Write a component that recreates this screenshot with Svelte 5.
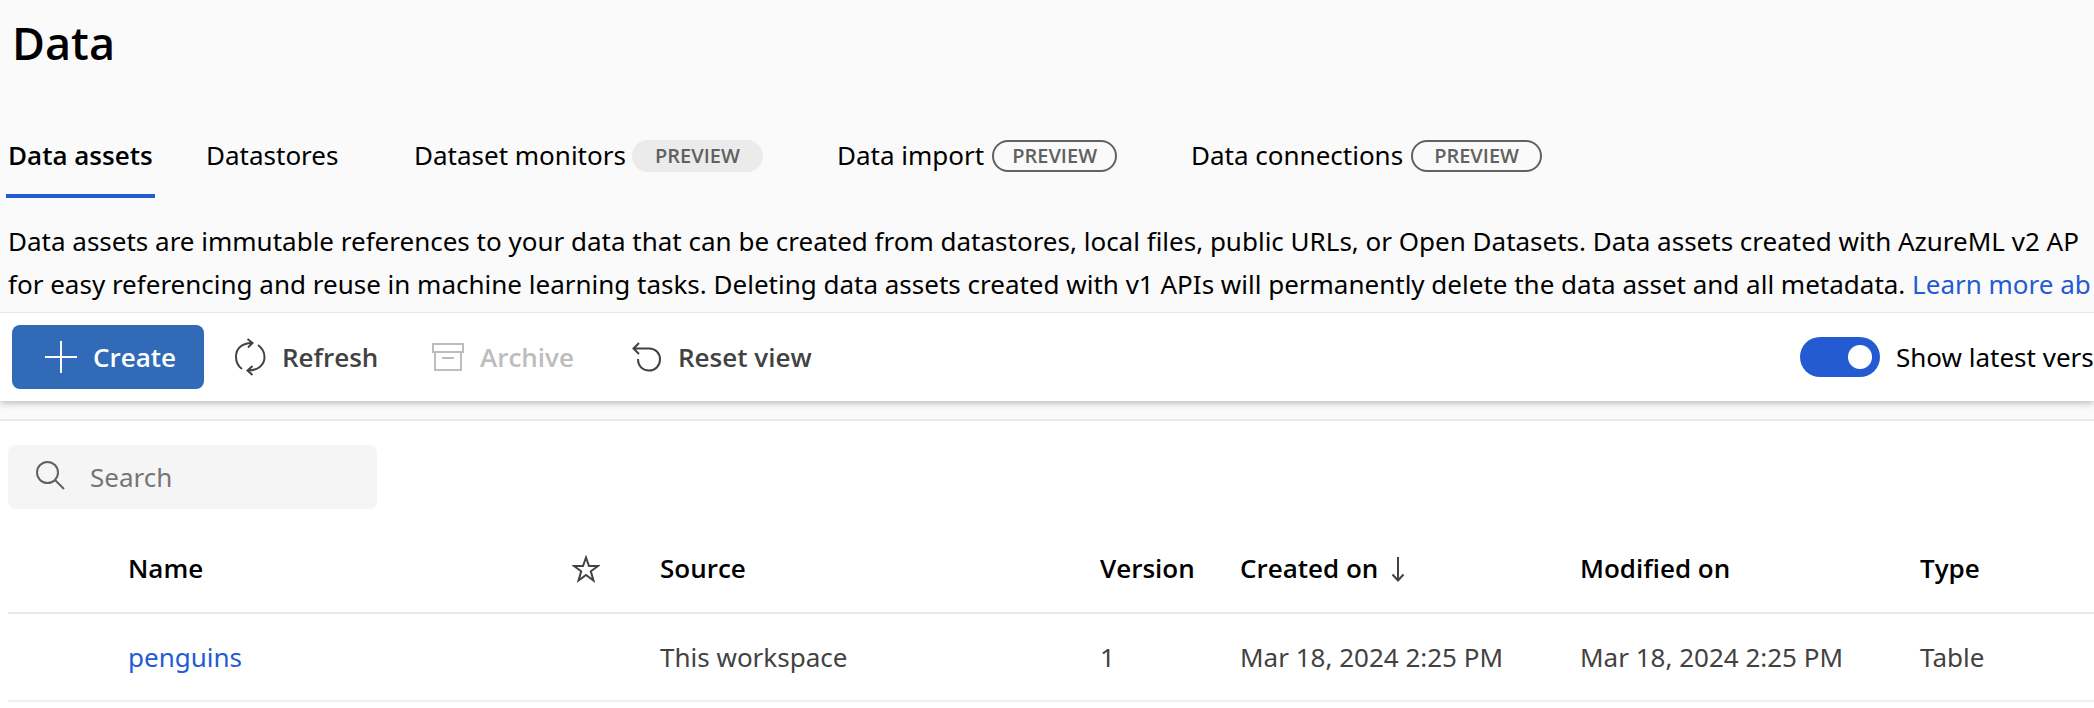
<script>
  const tabs = [
    { label: 'Data assets', active: true, slot: 198 },
    { label: 'Datastores', slot: 208 },
    { label: 'Dataset monitors', badge: 'filled', slot: 423 },
    { label: 'Data import', badge: 'outline', slot: 354 },
    { label: 'Data connections', badge: 'outline wide', slot: 354 }
  ];
  const rows = [
    {
      name: 'penguins',
      source: 'This workspace',
      version: '1',
      created: 'Mar 18, 2024 2:25 PM',
      modified: 'Mar 18, 2024 2:25 PM',
      type: 'Table'
    }
  ];
  let latest = $state(true);
  let query = $state('');
</script>

<main>
  <header>
    <h1>Data</h1>
    <nav aria-label="Data sections">
      {#each tabs as tab}
        <div class="slot" style="width: {tab.slot}px">
          <button class="tab" class:active={tab.active}>
            <span>{tab.label}</span>
            {#if tab.badge}<span class="badge {tab.badge}">PREVIEW</span>{/if}
          </button>
        </div>
      {/each}
    </nav>
    <p>
      Data assets are immutable references to your data that can be created from datastores, local files, public URLs, or Open Datasets. Data assets created with AzureML v2 AP<br />
      for easy referencing and reuse in machine learning tasks. Deleting data assets created with v1 APIs will permanently delete the data asset and all metadata. <a href="#learn">Learn more ab</a>
    </p>
  </header>

  <div class="toolbar">
    <button class="create">
      <svg width="32" height="32" viewBox="0 0 32 32"><path d="M16 0V32M0 16H32" /></svg>
      Create
    </button>
    <button class="command refresh">
      <svg width="32" height="38" viewBox="0 0 32 38">
        <path d="M8 31C3.500 28 2 23.500 2 18.500C2 10.500 8 5 18 5M13.500 1L18.500 5L14 9.500M24 7C28 10 30.500 14 30.500 19C30.500 27 24 32.500 14 32.500M18.500 28L13.500 32.500L18.500 37" />
      </svg>
      Refresh
    </button>
    <button class="command archive" disabled>
      <svg width="32" height="28" viewBox="0 0 32 28">
        <path d="M1 1H31V9H1ZM3 9V27H29V9M10 15H22" />
      </svg>
      Archive
    </button>
    <button class="command reset">
      <svg width="30" height="30" viewBox="0 0 30 30">
        <path d="M7 1L1.500 6.500L7 12M1.500 6.500H17C24 6.500 28 11.500 28 17.500C28 24 23 28.500 17 28.500C10.500 28.500 6 24 6 17" />
      </svg>
      Reset view
    </button>
    <label class="latest">
      <input type="checkbox" role="switch" bind:checked={latest} />
      <span>Show latest vers</span>
    </label>
  </div>

  <section>
    <label class="search">
      <svg width="29" height="29" viewBox="0 0 29 29">
        <circle cx="11.500" cy="11.500" r="10.500" /><path d="M19 19L28 28" />
      </svg>
      <input type="text" aria-label="Search" placeholder="Search" bind:value={query} />
    </label>

    <table>
      <colgroup>
        <col class="pick" /><col class="name" /><col class="star" /><col class="source" />
        <col class="version" /><col class="date" /><col class="date" /><col />
      </colgroup>
      <thead>
        <tr>
          <th></th>
          <th>Name</th>
          <th>
            <svg class="star-icon" width="28" height="28" viewBox="0 0 28 28" role="img" aria-label="Favorite">
              <path d="M14 2.500L17 11H26L18.800 16.300L21.500 25.500L14 20L6.500 25.500L9.200 16.300L2 11H11Z" />
            </svg>
          </th>
          <th>Source</th>
          <th>Version</th>
          <th>
            <span class="sorted">
              Created on
              <svg width="14" height="26" viewBox="0 0 14 26"><path d="M7 1V24M1.500 18.500L7 24.500L12.500 18.500" /></svg>
            </span>
          </th>
          <th>Modified on</th>
          <th>Type</th>
        </tr>
      </thead>
      <tbody>
        {#each rows as row}
          <tr>
            <td></td>
            <td><a href="#asset">{row.name}</a></td>
            <td></td>
            <td>{row.source}</td>
            <td>{row.version}</td>
            <td>{row.created}</td>
            <td>{row.modified}</td>
            <td>{row.type}</td>
          </tr>
        {/each}
      </tbody>
    </table>
  </section>
</main>

<style>
  :global(body) {
    margin: 0;
    background: #fff;
  }
  main {
    overflow: hidden;
    background: #fafafa;
    font: 26px/43px 'Noto Sans', 'Open Sans', sans-serif;
    color: #000;
    white-space: nowrap;
  }
  h1,
  th,
  .active,
  .badge,
  .toolbar button {
    font-family: 'Open Sans', 'Noto Sans', sans-serif;
    font-weight: 600;
  }
  button,
  input {
    font: inherit;
    color: inherit;
    margin: 0;
  }
  button {
    border: 0;
    background: none;
  }
  svg {
    flex: none;
    fill: none;
    stroke: currentColor;
    stroke-width: 2;
  }
  a {
    color: #245bd3;
    text-decoration: none;
  }
  header {
    padding: 11px 0 6px 8px;
  }
  h1 {
    margin: 0;
    padding-left: 4px;
    font-size: 45px;
    line-height: 64px;
  }
  nav {
    display: flex;
    margin-top: 35px;
  }
  .slot {
    flex: none;
  }
  .tab {
    display: flex;
    align-items: center;
    gap: 6px;
    height: 88px;
    padding: 3px 0 0;
    box-sizing: border-box;
  }
  .tab.active {
    margin-left: -2px;
    padding: 3px 2px 0;
    background: linear-gradient(#245bd3, #245bd3) 0 84px / 100% 4px no-repeat;
  }
  .badge {
    box-sizing: border-box;
    height: 32px;
    padding: 0 23px;
    border-radius: 16px;
    font-size: 20px;
    line-height: 32px;
    color: #616161;
  }
  .filled {
    background: #ebebeb;
  }
  .outline {
    margin-left: 2px;
    padding: 0 18px;
    border: 2px solid #616161;
    line-height: 28px;
  }
  .wide {
    padding: 0 21px;
  }
  p {
    margin: 22px 0 0;
  }
  .toolbar {
    position: relative;
    display: flex;
    align-items: center;
    height: 88px;
    padding-left: 12px;
    background: #fff;
    border-top: 1px solid #e8e8e8;
    box-shadow: 0 1px 8px rgba(0, 0, 0, 0.32);
    clip-path: inset(0 0 -18px 0);
  }
  .toolbar button {
    display: flex;
    align-items: center;
    gap: 16px;
    height: 64px;
    padding: 0;
  }
  .toolbar .create {
    box-sizing: border-box;
    width: 192px;
    padding-left: 33px;
    border-radius: 8px;
    background: #316bb7;
    color: #fff;
  }
  .command {
    color: #424242;
  }
  .refresh {
    width: 198px;
    margin-left: 30px;
  }
  .archive {
    width: 200px;
    color: #bdbdbd;
  }
  .latest {
    flex: 0 0 294px;
    min-width: 0;
    display: flex;
    align-items: center;
    gap: 16px;
    margin-left: auto;
  }
  .latest input {
    flex: none;
    appearance: none;
    width: 80px;
    height: 40px;
    border-radius: 20px;
    background: radial-gradient(circle at 20px 20px, #fff 11.5px, #616161 12.5px);
  }
  .latest input:checked {
    background: radial-gradient(circle at 60px 20px, #fff 11.5px, #245bd3 12.5px);
  }
  section {
    margin-top: 18px;
    padding: 24px 0 0 8px;
    background: #fff;
    border-top: 2px solid #ebebeb;
  }
  .search {
    box-sizing: border-box;
    display: flex;
    align-items: center;
    gap: 25px;
    width: 369px;
    height: 64px;
    padding: 0 16px 0 28px;
    border-radius: 8px;
    background: #f5f5f5;
    color: #616161;
  }
  .search svg {
    margin-bottom: 4px;
  }
  .search input {
    flex: 1;
    min-width: 0;
    padding: 0;
    border: 0;
    outline: 0;
    background: none;
  }
  .search input::placeholder {
    color: #757575;
    opacity: 1;
  }
  table {
    width: 100%;
    margin-top: 16px;
    table-layout: fixed;
    border-collapse: collapse;
  }
  .pick {
    width: 120px;
  }
  .name {
    width: 442px;
  }
  .star {
    width: 90px;
  }
  .source {
    width: 440px;
  }
  .version {
    width: 140px;
  }
  .date {
    width: 340px;
  }
  th,
  td {
    box-sizing: border-box;
    height: 88px;
    padding: 0;
    text-align: left;
    vertical-align: middle;
  }
  th {
    border-bottom: 2px solid #e8e8e8;
  }
  td {
    color: #424242;
    border-bottom: 2px solid #f0f0f0;
  }
  .star-icon {
    display: block;
    margin-left: 2px;
    color: #424242;
  }
  .sorted {
    display: flex;
    align-items: center;
    gap: 13px;
  }
  .sorted svg {
    color: #424242;
  }
</style>
